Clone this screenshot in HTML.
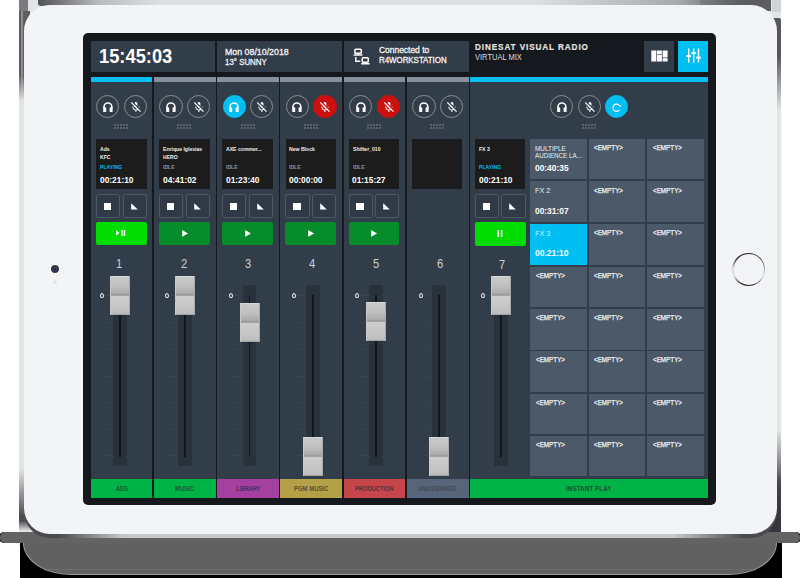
<!DOCTYPE html><html><head><meta charset="utf-8"><style>
*{margin:0;padding:0;box-sizing:border-box}
html,body{width:800px;height:578px;overflow:hidden;background:#fff}
body{position:relative;font-family:"Liberation Sans",sans-serif}
div,span,svg{position:absolute}
.t{white-space:nowrap;line-height:1}
</style></head><body>
<div style="left:19.50px;top:542.00px;width:762.00px;height:36.00px;background:#000"></div>
<div style="left:23.00px;top:536.00px;width:754.00px;height:39.00px;background:#9c9c9c;border-radius:0 0 48px 48px/0 0 32px 32px"></div>
<div style="left:24.20px;top:536.00px;width:751.60px;height:37.60px;background:linear-gradient(to bottom,#616161 0px,#616161 32.5px,#6a6a6a 33px,#6a6a6a 34px,#616161 34.5px);border-radius:0 0 47px 47px/0 0 31px 31px"></div>
<div style="left:0.00px;top:532.20px;width:800.00px;height:10.50px;background:#636363;border-radius:5px;box-shadow:-1px 0 0 #000,1px 0 0 #000"></div>
<div style="left:19.50px;top:532.20px;width:762.00px;height:10.50px;background:#636363"></div>
<div style="left:19.00px;top:0.00px;width:762.00px;height:532.20px;background:#e2e5e6"></div>
<div style="left:19.00px;top:0.00px;width:9.00px;height:12.00px;background:#7a7a80"></div>
<div style="left:19.00px;top:11.00px;width:11.00px;height:521.20px;background:linear-gradient(to bottom,#5c5d63 0px,#5c5d63 64px,#e2e5e6 90px,#e2e5e6 458px,#4c4d52 505px,#4c4d52 510px,#e2e5e6 520px)"></div>
<div style="left:21.20px;top:11.00px;width:1.80px;height:459.00px;background:linear-gradient(to bottom,rgba(255,255,255,0.3) 0px,rgba(255,255,255,0.3) 60px,rgba(255,255,255,0) 90px)"></div>
<div style="left:772.00px;top:0.00px;width:9.00px;height:12.00px;background:#d0d4d6"></div>
<div style="left:770.00px;top:18.00px;width:11.00px;height:514.20px;background:linear-gradient(to bottom,#55575c 0px,#55575c 38px,#e2e5e6 92px,#e2e5e6 412px,#4c4d52 467px,#4c4d52 514px);border-radius:2px 2px 0 0"></div>
<div style="left:745.00px;top:470.00px;width:36.00px;height:62.20px;background:linear-gradient(to bottom,rgba(54,54,60,0) 0px,#36363c 40px)"></div>
<div style="left:37.50px;top:0.00px;width:733.50px;height:6.00px;background:linear-gradient(to right,#505057 0px,#b8babc 60px,#dcdfdf 120px,#dcdfdf 500px,#a8aaac 640px,#5c5d63 700px,#5c5d63 734.5px);border-radius:0 0 3px 3px"></div>
<div style="left:700.00px;top:0.00px;width:71.00px;height:11.00px;background:linear-gradient(to right,#7c7d82 0px,#5c5d63 40px)"></div>
<div style="left:23.50px;top:8.50px;width:753.80px;height:529.30px;background:linear-gradient(to right,#4a4b50 0px,#4a4b50 35px,#c6c8ca 100px,#c6c8ca 650px,#4a4b50 720px);border-radius:26px"></div>
<div style="left:23.50px;top:4.50px;width:753.80px;height:529.20px;background:#f3f4f6;border-radius:26px"></div>
<div style="left:50.80px;top:265.30px;width:8.20px;height:8.20px;background:#3a3a3e;border-radius:50%;box-shadow:0 0 0 1px #fff"><div style="left:2.6px;top:2.6px;width:3px;height:3px;border-radius:50%;background:#1c3384"></div></div>
<div style="left:53.00px;top:280.10px;width:4.40px;height:4.40px;background:#e3e5e8;border-radius:50%"></div>
<div style="left:732.30px;top:252.80px;width:33.20px;height:33.20px;border-radius:50%;background:conic-gradient(#2c2d32 0deg,#3a3b40 50deg,#b8babd 95deg,#c8cacc 115deg,#2c2d32 160deg,#2c2d32 205deg,#d8dadc 245deg,#d8dadc 275deg,#3a3b40 315deg,#2c2d32 360deg)"><div style="left:1.4px;top:1.4px;right:1.4px;bottom:1.4px;border-radius:50%;background:#f3f4f6"></div></div>
<div style="left:83.00px;top:33.00px;width:632.50px;height:471.80px;background:#15191d;border-radius:5px"></div>
<div style="left:90.50px;top:41.00px;width:124.90px;height:31.00px;background:#323d4a"></div>
<div style="left:217.00px;top:41.00px;width:125.00px;height:31.00px;background:#323d4a"></div>
<div style="left:343.70px;top:41.00px;width:124.90px;height:31.00px;background:#323d4a"></div>
<div class="t" style="left:99.00px;top:45.95px;font-size:20.14px;font-weight:bold;color:#fff;transform:scaleX(0.910);transform-origin:0 0;">15:45:03</div>
<div class="t" style="left:225.20px;top:46.53px;font-size:9.42px;color:#f4f4f4;transform:scaleX(0.937);transform-origin:0 0;-webkit-text-stroke:0.3px #f4f4f4">Mon 08/10/2018</div>
<div class="t" style="left:225.20px;top:57.03px;font-size:9.42px;color:#f4f4f4;transform:scaleX(0.839);transform-origin:0 0;-webkit-text-stroke:0.3px #f4f4f4">13° SUNNY</div>
<div class="t" style="left:378.80px;top:46.39px;font-size:8.99px;color:#f4f4f4;transform:scaleX(0.939);transform-origin:0 0;-webkit-text-stroke:0.3px #f4f4f4">Connected to</div>
<div class="t" style="left:378.80px;top:56.14px;font-size:8.70px;color:#f4f4f4;transform:scaleX(0.908);transform-origin:0 0;-webkit-text-stroke:0.3px #f4f4f4">R4WORKSTATION</div>
<svg style="left:352px;top:47px" width="20" height="19" viewBox="0 0 20 19">
<rect x="2.9" y="2.32" width="6.4" height="3.9" rx="0.8" fill="none" stroke="#fff" stroke-width="1.5"/>
<rect x="1.6" y="7.3" width="8.9" height="1.5" rx="0.4" fill="#fff"/>
<path d="M3.8 10.0 V14.3 H8.2" fill="none" stroke="#fff" stroke-width="1.4"/>
<rect x="10.25" y="10.85" width="6" height="4.3" rx="0.8" fill="none" stroke="#fff" stroke-width="1.5"/>
<rect x="9.1" y="16.1" width="8.5" height="1.3" rx="0.4" fill="#fff"/>
</svg>
<div class="t" style="left:474.90px;top:42.97px;font-size:9.13px;font-weight:bold;color:#e2e2e2;transform:scaleX(0.895);transform-origin:0 0;-webkit-text-stroke:0.2px #e2e2e2;letter-spacing:1.0px">DINESAT VISUAL RADIO</div>
<div class="t" style="left:474.90px;top:53.29px;font-size:8.99px;color:#dcdcdc;transform:scaleX(0.838);transform-origin:0 0;">VIRTUAL MIX</div>
<div style="left:643.70px;top:41.40px;width:30.40px;height:30.40px;background:#323d4a"><svg style="left:7px;top:8.5px" width="17" height="12" viewBox="0 0 17 12">
<rect x="0.3" y="0.5" width="5" height="11" fill="#fff"/>
<rect x="5.9" y="0.5" width="5" height="3.5" fill="#fff"/>
<rect x="5.9" y="4.6" width="5" height="6.9" fill="#fff"/>
<rect x="11.6" y="0.5" width="5" height="7" fill="#fff"/>
<rect x="11.6" y="8.2" width="5" height="3.3" fill="#fff"/>
</svg></div>
<div style="left:677.80px;top:41.40px;width:30.40px;height:30.40px;background:#00bff2"><svg style="left:0;top:0" width="30.4" height="30.4" viewBox="0 0 30.4 30.4">
<g fill="#fff"><rect x="10.0" y="7.5" width="1.4" height="14"/><rect x="15.0" y="7.5" width="1.4" height="14"/><rect x="19.8" y="7.5" width="1.4" height="14"/>
<rect x="8.3" y="14.2" width="4.8" height="1.8"/><rect x="13.3" y="11.2" width="4.8" height="1.8"/><rect x="18.1" y="15.7" width="4.8" height="1.8"/></g>
</svg></div>
<div style="left:90.50px;top:76.50px;width:61.90px;height:5.50px;background:#00bff2"></div>
<div style="left:90.50px;top:82.00px;width:61.90px;height:396.80px;background:#323d4a"></div>
<div style="left:96.00px;top:95.10px;width:23.40px;height:23.40px;border-radius:50%;border:1.2px solid #8a8d90;background:transparent"></div><svg style="left:102.60px;top:101.90px" width="10" height="10" viewBox="0 0 10 10"><path d="M0.95 6.5 V4.9 A3.95 3.95 0 0 1 8.85 4.9 V6.5" fill="none" stroke="#fff" stroke-width="1.5"/><rect x="0.2" y="5.2" width="3" height="5" rx="0.8" fill="#fff"/><rect x="6.6" y="5.2" width="3" height="5" rx="0.8" fill="#fff"/></svg><div style="left:123.60px;top:95.10px;width:23.40px;height:23.40px;border-radius:50%;border:1.2px solid #8a8d90;background:transparent"></div><svg style="left:130.70px;top:102.30px" width="10" height="10" viewBox="0 0 10 10"><rect x="3.4" y="0" width="3" height="5.6" rx="1.5" fill="#fff"/><path d="M1.7 4.6 Q1.7 8.1 4.9 8.1 Q8.1 8.1 8.1 4.6" fill="none" stroke="#fff" stroke-width="1"/><rect x="4.4" y="8" width="1" height="2" fill="#fff"/><path d="M1.2 -0.3 L10.2 8.7" stroke="#323d4a" stroke-width="1.3"/><path d="M0.3 0.5 L9.5 9.7" stroke="#fff" stroke-width="1.1"/></svg><div style="left:114.00px;top:124.00px;width:2.00px;height:2.00px;background:#58626e"></div><div style="left:117.00px;top:124.00px;width:2.00px;height:2.00px;background:#58626e"></div><div style="left:120.00px;top:124.00px;width:2.00px;height:2.00px;background:#58626e"></div><div style="left:123.00px;top:124.00px;width:2.00px;height:2.00px;background:#58626e"></div><div style="left:126.00px;top:124.00px;width:2.00px;height:2.00px;background:#58626e"></div><div style="left:114.00px;top:127.00px;width:2.00px;height:2.00px;background:#58626e"></div><div style="left:117.00px;top:127.00px;width:2.00px;height:2.00px;background:#58626e"></div><div style="left:120.00px;top:127.00px;width:2.00px;height:2.00px;background:#58626e"></div><div style="left:123.00px;top:127.00px;width:2.00px;height:2.00px;background:#58626e"></div><div style="left:126.00px;top:127.00px;width:2.00px;height:2.00px;background:#58626e"></div>
<div style="left:96.10px;top:138.80px;width:50.50px;height:50.00px;background:#1c1c1c"></div><div class="t" style="left:99.90px;top:147.27px;font-size:5.94px;font-weight:bold;color:#efefef;transform:scaleX(0.860);transform-origin:0 0;">Ads</div><div class="t" style="left:99.90px;top:155.02px;font-size:5.65px;font-weight:bold;color:#efefef;transform:scaleX(0.904);transform-origin:0 0;">KFC</div><div class="t" style="left:99.90px;top:165.27px;font-size:5.94px;font-weight:bold;color:#00bff2;transform:scaleX(0.860);transform-origin:0 0;">PLAYING</div><div class="t" style="left:99.70px;top:174.98px;font-size:9.71px;font-weight:bold;color:#fff;transform:scaleX(0.862);transform-origin:0 0;">00:21:10</div>
<div style="left:96.00px;top:193.80px;width:24.20px;height:24.10px;border:1px solid #4d5866;border-radius:2px;background:#2f3a46"></div><div style="left:103.80px;top:202.90px;width:7.40px;height:7.20px;background:#fff"></div><div style="left:122.50px;top:193.80px;width:24.20px;height:24.10px;border:1px solid #4d5866;border-radius:2px;background:#2f3a46"></div><svg style="left:130.50px;top:202.80px" width="8" height="8" viewBox="0 0 8 8"><path d="M0.2 0.2 L0.2 6.6 L6.8 6.6 Z" fill="#fff"/></svg>
<div style="left:96.00px;top:221.50px;width:50.70px;height:23.80px;background:#00dc00;border-radius:2px"></div><svg style="left:116.35px;top:230.40px" width="10" height="6" viewBox="0 0 10 6"><path d="M0 0.2 L3.5 3 L0 5.8 Z" fill="#fff"/><rect x="5.2" y="0" width="1.5" height="6" fill="#fff"/><rect x="7.7" y="0" width="1.5" height="6" fill="#fff"/></svg>
<div class="t" style="left:116.35px;top:258.48px;font-size:12.43px;color:#ccd0d5;transform:scaleX(0.899);transform-origin:0 0;">1</div>
<div style="left:103.60px;top:294.50px;width:5.60px;height:1.00px;background:#3b4653"></div><div style="left:103.60px;top:321.50px;width:5.60px;height:1.00px;background:#3b4653"></div><div style="left:103.60px;top:348.50px;width:5.60px;height:1.00px;background:#3b4653"></div><div style="left:103.60px;top:375.50px;width:5.60px;height:1.00px;background:#3b4653"></div><div style="left:103.60px;top:402.00px;width:5.60px;height:1.00px;background:#3b4653"></div><div style="left:103.60px;top:428.90px;width:5.60px;height:1.00px;background:#3b4653"></div><div style="left:103.60px;top:455.30px;width:5.60px;height:1.00px;background:#3b4653"></div><div style="left:113.20px;top:285.20px;width:13.60px;height:181.20px;background:#29313b"></div><div style="left:119.20px;top:294.80px;width:1.60px;height:162.40px;background:#12161a"></div><div style="left:109.95px;top:276.00px;width:20.10px;height:39.00px;background:linear-gradient(to bottom,#cacaca 0%,#c0c0c0 25%,#acacac 44%,#9a9a9a 48%,#a4a4a4 50%,#cdcdcd 52.5%,#c4c4c4 85%,#b9b9b9 100%);box-shadow:inset 1px 0 0 #c9c9c9,inset -1px 0 0 #a9a9a9,inset 0 1px 0 #d6d6d6,inset 0 -1px 0 #a4a4a4"></div>
<svg style="left:99.60px;top:292.6px" width="4" height="5.4" viewBox="0 0 4 5.4"><ellipse cx="2" cy="2.7" rx="1.45" ry="2.15" fill="none" stroke="#e6e9ec" stroke-width="1.05"/></svg>
<div style="left:90.50px;top:478.80px;width:61.90px;height:18.90px;background:#00b346"></div><div class="t" style="left:115.60px;top:485.59px;font-size:7.10px;font-weight:bold;color:rgba(45,40,45,0.72);transform:scaleX(0.800);transform-origin:0 0;">ADS</div>
<div style="left:153.75px;top:76.50px;width:61.90px;height:5.50px;background:#87909e"></div>
<div style="left:153.75px;top:82.00px;width:61.90px;height:396.80px;background:#323d4a"></div>
<div style="left:159.25px;top:95.10px;width:23.40px;height:23.40px;border-radius:50%;border:1.2px solid #8a8d90;background:transparent"></div><svg style="left:165.85px;top:101.90px" width="10" height="10" viewBox="0 0 10 10"><path d="M0.95 6.5 V4.9 A3.95 3.95 0 0 1 8.85 4.9 V6.5" fill="none" stroke="#fff" stroke-width="1.5"/><rect x="0.2" y="5.2" width="3" height="5" rx="0.8" fill="#fff"/><rect x="6.6" y="5.2" width="3" height="5" rx="0.8" fill="#fff"/></svg><div style="left:186.85px;top:95.10px;width:23.40px;height:23.40px;border-radius:50%;border:1.2px solid #8a8d90;background:transparent"></div><svg style="left:193.95px;top:102.30px" width="10" height="10" viewBox="0 0 10 10"><rect x="3.4" y="0" width="3" height="5.6" rx="1.5" fill="#fff"/><path d="M1.7 4.6 Q1.7 8.1 4.9 8.1 Q8.1 8.1 8.1 4.6" fill="none" stroke="#fff" stroke-width="1"/><rect x="4.4" y="8" width="1" height="2" fill="#fff"/><path d="M1.2 -0.3 L10.2 8.7" stroke="#323d4a" stroke-width="1.3"/><path d="M0.3 0.5 L9.5 9.7" stroke="#fff" stroke-width="1.1"/></svg><div style="left:177.00px;top:124.00px;width:2.00px;height:2.00px;background:#58626e"></div><div style="left:180.00px;top:124.00px;width:2.00px;height:2.00px;background:#58626e"></div><div style="left:183.00px;top:124.00px;width:2.00px;height:2.00px;background:#58626e"></div><div style="left:186.00px;top:124.00px;width:2.00px;height:2.00px;background:#58626e"></div><div style="left:189.00px;top:124.00px;width:2.00px;height:2.00px;background:#58626e"></div><div style="left:177.00px;top:127.00px;width:2.00px;height:2.00px;background:#58626e"></div><div style="left:180.00px;top:127.00px;width:2.00px;height:2.00px;background:#58626e"></div><div style="left:183.00px;top:127.00px;width:2.00px;height:2.00px;background:#58626e"></div><div style="left:186.00px;top:127.00px;width:2.00px;height:2.00px;background:#58626e"></div><div style="left:189.00px;top:127.00px;width:2.00px;height:2.00px;background:#58626e"></div>
<div style="left:159.25px;top:138.80px;width:50.50px;height:50.00px;background:#1c1c1c"></div><div class="t" style="left:163.05px;top:147.27px;font-size:5.94px;font-weight:bold;color:#efefef;transform:scaleX(0.860);transform-origin:0 0;">Enrique Iglesias</div><div class="t" style="left:163.05px;top:155.02px;font-size:5.65px;font-weight:bold;color:#efefef;transform:scaleX(0.904);transform-origin:0 0;">HERO</div><div class="t" style="left:163.05px;top:165.27px;font-size:5.94px;font-weight:bold;color:#8a93a6;transform:scaleX(0.860);transform-origin:0 0;">IDLE</div><div class="t" style="left:162.85px;top:174.98px;font-size:9.71px;font-weight:bold;color:#fff;transform:scaleX(0.862);transform-origin:0 0;">04:41:02</div>
<div style="left:159.15px;top:193.80px;width:24.20px;height:24.10px;border:1px solid #4d5866;border-radius:2px;background:#2f3a46"></div><div style="left:166.95px;top:202.90px;width:7.40px;height:7.20px;background:#fff"></div><div style="left:185.65px;top:193.80px;width:24.20px;height:24.10px;border:1px solid #4d5866;border-radius:2px;background:#2f3a46"></div><svg style="left:193.65px;top:202.80px" width="8" height="8" viewBox="0 0 8 8"><path d="M0.2 0.2 L0.2 6.6 L6.8 6.6 Z" fill="#fff"/></svg>
<div style="left:159.15px;top:221.50px;width:50.70px;height:23.80px;background:#078c2c;border-radius:2px"></div><svg style="left:181.50px;top:229.90px" width="7" height="7" viewBox="0 0 7 7"><path d="M0.2 0 L6 3.4 L0.2 6.8 Z" fill="#fff"/></svg>
<div class="t" style="left:180.65px;top:258.48px;font-size:12.43px;color:#ccd0d5;transform:scaleX(0.899);transform-origin:0 0;">2</div>
<div style="left:168.80px;top:294.50px;width:5.60px;height:1.00px;background:#3b4653"></div><div style="left:168.80px;top:321.50px;width:5.60px;height:1.00px;background:#3b4653"></div><div style="left:168.80px;top:348.50px;width:5.60px;height:1.00px;background:#3b4653"></div><div style="left:168.80px;top:375.50px;width:5.60px;height:1.00px;background:#3b4653"></div><div style="left:168.80px;top:402.00px;width:5.60px;height:1.00px;background:#3b4653"></div><div style="left:168.80px;top:428.90px;width:5.60px;height:1.00px;background:#3b4653"></div><div style="left:168.80px;top:455.30px;width:5.60px;height:1.00px;background:#3b4653"></div><div style="left:178.40px;top:285.20px;width:13.60px;height:181.20px;background:#29313b"></div><div style="left:184.40px;top:294.80px;width:1.60px;height:162.40px;background:#12161a"></div><div style="left:175.15px;top:276.00px;width:20.10px;height:39.00px;background:linear-gradient(to bottom,#cacaca 0%,#c0c0c0 25%,#acacac 44%,#9a9a9a 48%,#a4a4a4 50%,#cdcdcd 52.5%,#c4c4c4 85%,#b9b9b9 100%);box-shadow:inset 1px 0 0 #c9c9c9,inset -1px 0 0 #a9a9a9,inset 0 1px 0 #d6d6d6,inset 0 -1px 0 #a4a4a4"></div>
<svg style="left:164.80px;top:292.6px" width="4" height="5.4" viewBox="0 0 4 5.4"><ellipse cx="2" cy="2.7" rx="1.45" ry="2.15" fill="none" stroke="#e6e9ec" stroke-width="1.05"/></svg>
<div style="left:153.75px;top:478.80px;width:61.90px;height:18.90px;background:#00b346"></div><div class="t" style="left:175.30px;top:485.59px;font-size:7.10px;font-weight:bold;color:rgba(45,40,45,0.72);transform:scaleX(0.826);transform-origin:0 0;">MUSIC</div>
<div style="left:217.00px;top:76.50px;width:61.90px;height:5.50px;background:#87909e"></div>
<div style="left:217.00px;top:82.00px;width:61.90px;height:396.80px;background:#323d4a"></div>
<div style="left:222.50px;top:95.10px;width:23.40px;height:23.40px;border-radius:50%;border:1.2px solid #00bff2;background:#00bff2"></div><svg style="left:229.10px;top:101.90px" width="10" height="10" viewBox="0 0 10 10"><path d="M0.95 6.5 V4.9 A3.95 3.95 0 0 1 8.85 4.9 V6.5" fill="none" stroke="#fff" stroke-width="1.5"/><rect x="0.2" y="5.2" width="3" height="5" rx="0.8" fill="#fff"/><rect x="6.6" y="5.2" width="3" height="5" rx="0.8" fill="#fff"/></svg><div style="left:250.10px;top:95.10px;width:23.40px;height:23.40px;border-radius:50%;border:1.2px solid #8a8d90;background:transparent"></div><svg style="left:257.20px;top:102.30px" width="10" height="10" viewBox="0 0 10 10"><rect x="3.4" y="0" width="3" height="5.6" rx="1.5" fill="#fff"/><path d="M1.7 4.6 Q1.7 8.1 4.9 8.1 Q8.1 8.1 8.1 4.6" fill="none" stroke="#fff" stroke-width="1"/><rect x="4.4" y="8" width="1" height="2" fill="#fff"/><path d="M1.2 -0.3 L10.2 8.7" stroke="#323d4a" stroke-width="1.3"/><path d="M0.3 0.5 L9.5 9.7" stroke="#fff" stroke-width="1.1"/></svg><div style="left:241.00px;top:124.00px;width:2.00px;height:2.00px;background:#58626e"></div><div style="left:244.00px;top:124.00px;width:2.00px;height:2.00px;background:#58626e"></div><div style="left:247.00px;top:124.00px;width:2.00px;height:2.00px;background:#58626e"></div><div style="left:250.00px;top:124.00px;width:2.00px;height:2.00px;background:#58626e"></div><div style="left:253.00px;top:124.00px;width:2.00px;height:2.00px;background:#58626e"></div><div style="left:241.00px;top:127.00px;width:2.00px;height:2.00px;background:#58626e"></div><div style="left:244.00px;top:127.00px;width:2.00px;height:2.00px;background:#58626e"></div><div style="left:247.00px;top:127.00px;width:2.00px;height:2.00px;background:#58626e"></div><div style="left:250.00px;top:127.00px;width:2.00px;height:2.00px;background:#58626e"></div><div style="left:253.00px;top:127.00px;width:2.00px;height:2.00px;background:#58626e"></div>
<div style="left:222.40px;top:138.80px;width:50.50px;height:50.00px;background:#1c1c1c"></div><div class="t" style="left:226.20px;top:147.27px;font-size:5.94px;font-weight:bold;color:#efefef;transform:scaleX(0.860);transform-origin:0 0;">AXE commer...</div><div class="t" style="left:226.20px;top:165.27px;font-size:5.94px;font-weight:bold;color:#8a93a6;transform:scaleX(0.860);transform-origin:0 0;">IDLE</div><div class="t" style="left:226.00px;top:174.98px;font-size:9.71px;font-weight:bold;color:#fff;transform:scaleX(0.862);transform-origin:0 0;">01:23:40</div>
<div style="left:222.30px;top:193.80px;width:24.20px;height:24.10px;border:1px solid #4d5866;border-radius:2px;background:#2f3a46"></div><div style="left:230.10px;top:202.90px;width:7.40px;height:7.20px;background:#fff"></div><div style="left:248.80px;top:193.80px;width:24.20px;height:24.10px;border:1px solid #4d5866;border-radius:2px;background:#2f3a46"></div><svg style="left:256.80px;top:202.80px" width="8" height="8" viewBox="0 0 8 8"><path d="M0.2 0.2 L0.2 6.6 L6.8 6.6 Z" fill="#fff"/></svg>
<div style="left:222.30px;top:221.50px;width:50.70px;height:23.80px;background:#078c2c;border-radius:2px"></div><svg style="left:244.65px;top:229.90px" width="7" height="7" viewBox="0 0 7 7"><path d="M0.2 0 L6 3.4 L0.2 6.8 Z" fill="#fff"/></svg>
<div class="t" style="left:245.00px;top:258.48px;font-size:12.43px;color:#ccd0d5;transform:scaleX(0.899);transform-origin:0 0;">3</div>
<div style="left:233.30px;top:294.50px;width:5.60px;height:1.00px;background:#3b4653"></div><div style="left:233.30px;top:321.50px;width:5.60px;height:1.00px;background:#3b4653"></div><div style="left:233.30px;top:348.50px;width:5.60px;height:1.00px;background:#3b4653"></div><div style="left:233.30px;top:375.50px;width:5.60px;height:1.00px;background:#3b4653"></div><div style="left:233.30px;top:402.00px;width:5.60px;height:1.00px;background:#3b4653"></div><div style="left:233.30px;top:428.90px;width:5.60px;height:1.00px;background:#3b4653"></div><div style="left:233.30px;top:455.30px;width:5.60px;height:1.00px;background:#3b4653"></div><div style="left:242.90px;top:285.20px;width:13.60px;height:181.20px;background:#29313b"></div><div style="left:248.90px;top:294.80px;width:1.60px;height:162.40px;background:#12161a"></div><div style="left:239.65px;top:302.80px;width:20.10px;height:39.00px;background:linear-gradient(to bottom,#cacaca 0%,#c0c0c0 25%,#acacac 44%,#9a9a9a 48%,#a4a4a4 50%,#cdcdcd 52.5%,#c4c4c4 85%,#b9b9b9 100%);box-shadow:inset 1px 0 0 #c9c9c9,inset -1px 0 0 #a9a9a9,inset 0 1px 0 #d6d6d6,inset 0 -1px 0 #a4a4a4"></div>
<svg style="left:229.30px;top:292.6px" width="4" height="5.4" viewBox="0 0 4 5.4"><ellipse cx="2" cy="2.7" rx="1.45" ry="2.15" fill="none" stroke="#e6e9ec" stroke-width="1.05"/></svg>
<div style="left:217.00px;top:478.80px;width:61.90px;height:18.90px;background:#a441a0"></div><div class="t" style="left:235.80px;top:485.59px;font-size:7.10px;font-weight:bold;color:rgba(45,40,45,0.72);transform:scaleX(0.780);transform-origin:0 0;">LIBRARY</div>
<div style="left:280.25px;top:76.50px;width:61.90px;height:5.50px;background:#87909e"></div>
<div style="left:280.25px;top:82.00px;width:61.90px;height:396.80px;background:#323d4a"></div>
<div style="left:285.75px;top:95.10px;width:23.40px;height:23.40px;border-radius:50%;border:1.2px solid #8a8d90;background:transparent"></div><svg style="left:292.35px;top:101.90px" width="10" height="10" viewBox="0 0 10 10"><path d="M0.95 6.5 V4.9 A3.95 3.95 0 0 1 8.85 4.9 V6.5" fill="none" stroke="#fff" stroke-width="1.5"/><rect x="0.2" y="5.2" width="3" height="5" rx="0.8" fill="#fff"/><rect x="6.6" y="5.2" width="3" height="5" rx="0.8" fill="#fff"/></svg><div style="left:313.35px;top:95.10px;width:23.40px;height:23.40px;border-radius:50%;border:1.2px solid #cc1010;background:#cc1010"></div><svg style="left:320.45px;top:102.30px" width="10" height="10" viewBox="0 0 10 10"><rect x="3.4" y="0" width="3" height="5.6" rx="1.5" fill="#fff"/><path d="M1.7 4.6 Q1.7 8.1 4.9 8.1 Q8.1 8.1 8.1 4.6" fill="none" stroke="#fff" stroke-width="1"/><rect x="4.4" y="8" width="1" height="2" fill="#fff"/><path d="M1.2 -0.3 L10.2 8.7" stroke="#cc1010" stroke-width="1.3"/><path d="M0.3 0.5 L9.5 9.7" stroke="#fff" stroke-width="1.1"/></svg><div style="left:304.00px;top:124.00px;width:2.00px;height:2.00px;background:#58626e"></div><div style="left:307.00px;top:124.00px;width:2.00px;height:2.00px;background:#58626e"></div><div style="left:310.00px;top:124.00px;width:2.00px;height:2.00px;background:#58626e"></div><div style="left:313.00px;top:124.00px;width:2.00px;height:2.00px;background:#58626e"></div><div style="left:316.00px;top:124.00px;width:2.00px;height:2.00px;background:#58626e"></div><div style="left:304.00px;top:127.00px;width:2.00px;height:2.00px;background:#58626e"></div><div style="left:307.00px;top:127.00px;width:2.00px;height:2.00px;background:#58626e"></div><div style="left:310.00px;top:127.00px;width:2.00px;height:2.00px;background:#58626e"></div><div style="left:313.00px;top:127.00px;width:2.00px;height:2.00px;background:#58626e"></div><div style="left:316.00px;top:127.00px;width:2.00px;height:2.00px;background:#58626e"></div>
<div style="left:285.55px;top:138.80px;width:50.50px;height:50.00px;background:#1c1c1c"></div><div class="t" style="left:289.35px;top:147.27px;font-size:5.94px;font-weight:bold;color:#efefef;transform:scaleX(0.860);transform-origin:0 0;">New Block</div><div class="t" style="left:289.35px;top:165.27px;font-size:5.94px;font-weight:bold;color:#8a93a6;transform:scaleX(0.860);transform-origin:0 0;">IDLE</div><div class="t" style="left:289.15px;top:174.98px;font-size:9.71px;font-weight:bold;color:#fff;transform:scaleX(0.862);transform-origin:0 0;">00:00:00</div>
<div style="left:285.45px;top:193.80px;width:24.20px;height:24.10px;border:1px solid #4d5866;border-radius:2px;background:#2f3a46"></div><div style="left:293.25px;top:202.90px;width:7.40px;height:7.20px;background:#fff"></div><div style="left:311.95px;top:193.80px;width:24.20px;height:24.10px;border:1px solid #4d5866;border-radius:2px;background:#2f3a46"></div><svg style="left:319.95px;top:202.80px" width="8" height="8" viewBox="0 0 8 8"><path d="M0.2 0.2 L0.2 6.6 L6.8 6.6 Z" fill="#fff"/></svg>
<div style="left:285.45px;top:221.50px;width:50.70px;height:23.80px;background:#078c2c;border-radius:2px"></div><svg style="left:307.80px;top:229.90px" width="7" height="7" viewBox="0 0 7 7"><path d="M0.2 0 L6 3.4 L0.2 6.8 Z" fill="#fff"/></svg>
<div class="t" style="left:308.60px;top:258.48px;font-size:12.43px;color:#ccd0d5;transform:scaleX(0.899);transform-origin:0 0;">4</div>
<div style="left:296.40px;top:294.50px;width:5.60px;height:1.00px;background:#3b4653"></div><div style="left:296.40px;top:321.50px;width:5.60px;height:1.00px;background:#3b4653"></div><div style="left:296.40px;top:348.50px;width:5.60px;height:1.00px;background:#3b4653"></div><div style="left:296.40px;top:375.50px;width:5.60px;height:1.00px;background:#3b4653"></div><div style="left:296.40px;top:402.00px;width:5.60px;height:1.00px;background:#3b4653"></div><div style="left:296.40px;top:428.90px;width:5.60px;height:1.00px;background:#3b4653"></div><div style="left:296.40px;top:455.30px;width:5.60px;height:1.00px;background:#3b4653"></div><div style="left:306.00px;top:285.20px;width:13.60px;height:181.20px;background:#29313b"></div><div style="left:312.00px;top:294.80px;width:1.60px;height:162.40px;background:#12161a"></div><div style="left:302.75px;top:436.80px;width:20.10px;height:39.00px;background:linear-gradient(to bottom,#cacaca 0%,#c0c0c0 25%,#acacac 44%,#9a9a9a 48%,#a4a4a4 50%,#cdcdcd 52.5%,#c4c4c4 85%,#b9b9b9 100%);box-shadow:inset 1px 0 0 #c9c9c9,inset -1px 0 0 #a9a9a9,inset 0 1px 0 #d6d6d6,inset 0 -1px 0 #a4a4a4"></div>
<svg style="left:292.40px;top:292.6px" width="4" height="5.4" viewBox="0 0 4 5.4"><ellipse cx="2" cy="2.7" rx="1.45" ry="2.15" fill="none" stroke="#e6e9ec" stroke-width="1.05"/></svg>
<div style="left:280.25px;top:478.80px;width:61.90px;height:18.90px;background:#b4a046"></div><div class="t" style="left:293.70px;top:485.59px;font-size:7.10px;font-weight:bold;color:rgba(45,40,45,0.72);transform:scaleX(0.838);transform-origin:0 0;">PGM MUSIC</div>
<div style="left:343.50px;top:76.50px;width:61.90px;height:5.50px;background:#87909e"></div>
<div style="left:343.50px;top:82.00px;width:61.90px;height:396.80px;background:#323d4a"></div>
<div style="left:349.00px;top:95.10px;width:23.40px;height:23.40px;border-radius:50%;border:1.2px solid #8a8d90;background:transparent"></div><svg style="left:355.60px;top:101.90px" width="10" height="10" viewBox="0 0 10 10"><path d="M0.95 6.5 V4.9 A3.95 3.95 0 0 1 8.85 4.9 V6.5" fill="none" stroke="#fff" stroke-width="1.5"/><rect x="0.2" y="5.2" width="3" height="5" rx="0.8" fill="#fff"/><rect x="6.6" y="5.2" width="3" height="5" rx="0.8" fill="#fff"/></svg><div style="left:376.60px;top:95.10px;width:23.40px;height:23.40px;border-radius:50%;border:1.2px solid #cc1010;background:#cc1010"></div><svg style="left:383.70px;top:102.30px" width="10" height="10" viewBox="0 0 10 10"><rect x="3.4" y="0" width="3" height="5.6" rx="1.5" fill="#fff"/><path d="M1.7 4.6 Q1.7 8.1 4.9 8.1 Q8.1 8.1 8.1 4.6" fill="none" stroke="#fff" stroke-width="1"/><rect x="4.4" y="8" width="1" height="2" fill="#fff"/><path d="M1.2 -0.3 L10.2 8.7" stroke="#cc1010" stroke-width="1.3"/><path d="M0.3 0.5 L9.5 9.7" stroke="#fff" stroke-width="1.1"/></svg><div style="left:367.00px;top:124.00px;width:2.00px;height:2.00px;background:#58626e"></div><div style="left:370.00px;top:124.00px;width:2.00px;height:2.00px;background:#58626e"></div><div style="left:373.00px;top:124.00px;width:2.00px;height:2.00px;background:#58626e"></div><div style="left:376.00px;top:124.00px;width:2.00px;height:2.00px;background:#58626e"></div><div style="left:379.00px;top:124.00px;width:2.00px;height:2.00px;background:#58626e"></div><div style="left:367.00px;top:127.00px;width:2.00px;height:2.00px;background:#58626e"></div><div style="left:370.00px;top:127.00px;width:2.00px;height:2.00px;background:#58626e"></div><div style="left:373.00px;top:127.00px;width:2.00px;height:2.00px;background:#58626e"></div><div style="left:376.00px;top:127.00px;width:2.00px;height:2.00px;background:#58626e"></div><div style="left:379.00px;top:127.00px;width:2.00px;height:2.00px;background:#58626e"></div>
<div style="left:348.70px;top:138.80px;width:50.50px;height:50.00px;background:#1c1c1c"></div><div class="t" style="left:352.50px;top:147.27px;font-size:5.94px;font-weight:bold;color:#efefef;transform:scaleX(0.860);transform-origin:0 0;">Shifter_010</div><div class="t" style="left:352.50px;top:165.27px;font-size:5.94px;font-weight:bold;color:#8a93a6;transform:scaleX(0.860);transform-origin:0 0;">IDLE</div><div class="t" style="left:352.30px;top:174.98px;font-size:9.71px;font-weight:bold;color:#fff;transform:scaleX(0.862);transform-origin:0 0;">01:15:27</div>
<div style="left:348.60px;top:193.80px;width:24.20px;height:24.10px;border:1px solid #4d5866;border-radius:2px;background:#2f3a46"></div><div style="left:356.40px;top:202.90px;width:7.40px;height:7.20px;background:#fff"></div><div style="left:375.10px;top:193.80px;width:24.20px;height:24.10px;border:1px solid #4d5866;border-radius:2px;background:#2f3a46"></div><svg style="left:383.10px;top:202.80px" width="8" height="8" viewBox="0 0 8 8"><path d="M0.2 0.2 L0.2 6.6 L6.8 6.6 Z" fill="#fff"/></svg>
<div style="left:348.60px;top:221.50px;width:50.70px;height:23.80px;background:#078c2c;border-radius:2px"></div><svg style="left:370.95px;top:229.90px" width="7" height="7" viewBox="0 0 7 7"><path d="M0.2 0 L6 3.4 L0.2 6.8 Z" fill="#fff"/></svg>
<div class="t" style="left:373.15px;top:258.48px;font-size:12.43px;color:#ccd0d5;transform:scaleX(0.899);transform-origin:0 0;">5</div>
<div style="left:359.35px;top:294.50px;width:5.60px;height:1.00px;background:#3b4653"></div><div style="left:359.35px;top:321.50px;width:5.60px;height:1.00px;background:#3b4653"></div><div style="left:359.35px;top:348.50px;width:5.60px;height:1.00px;background:#3b4653"></div><div style="left:359.35px;top:375.50px;width:5.60px;height:1.00px;background:#3b4653"></div><div style="left:359.35px;top:402.00px;width:5.60px;height:1.00px;background:#3b4653"></div><div style="left:359.35px;top:428.90px;width:5.60px;height:1.00px;background:#3b4653"></div><div style="left:359.35px;top:455.30px;width:5.60px;height:1.00px;background:#3b4653"></div><div style="left:368.95px;top:285.20px;width:13.60px;height:181.20px;background:#29313b"></div><div style="left:374.95px;top:294.80px;width:1.60px;height:162.40px;background:#12161a"></div><div style="left:365.70px;top:302.00px;width:20.10px;height:39.00px;background:linear-gradient(to bottom,#cacaca 0%,#c0c0c0 25%,#acacac 44%,#9a9a9a 48%,#a4a4a4 50%,#cdcdcd 52.5%,#c4c4c4 85%,#b9b9b9 100%);box-shadow:inset 1px 0 0 #c9c9c9,inset -1px 0 0 #a9a9a9,inset 0 1px 0 #d6d6d6,inset 0 -1px 0 #a4a4a4"></div>
<svg style="left:355.35px;top:292.6px" width="4" height="5.4" viewBox="0 0 4 5.4"><ellipse cx="2" cy="2.7" rx="1.45" ry="2.15" fill="none" stroke="#e6e9ec" stroke-width="1.05"/></svg>
<div style="left:343.50px;top:478.80px;width:61.90px;height:18.90px;background:#c6454a"></div><div class="t" style="left:354.80px;top:485.59px;font-size:7.10px;font-weight:bold;color:rgba(45,40,45,0.72);transform:scaleX(0.811);transform-origin:0 0;">PRODUCTION</div>
<div style="left:406.75px;top:76.50px;width:61.90px;height:5.50px;background:#87909e"></div>
<div style="left:406.75px;top:82.00px;width:61.90px;height:396.80px;background:#323d4a"></div>
<div style="left:412.25px;top:95.10px;width:23.40px;height:23.40px;border-radius:50%;border:1.2px solid #8a8d90;background:transparent"></div><svg style="left:418.85px;top:101.90px" width="10" height="10" viewBox="0 0 10 10"><path d="M0.95 6.5 V4.9 A3.95 3.95 0 0 1 8.85 4.9 V6.5" fill="none" stroke="#fff" stroke-width="1.5"/><rect x="0.2" y="5.2" width="3" height="5" rx="0.8" fill="#fff"/><rect x="6.6" y="5.2" width="3" height="5" rx="0.8" fill="#fff"/></svg><div style="left:439.85px;top:95.10px;width:23.40px;height:23.40px;border-radius:50%;border:1.2px solid #8a8d90;background:transparent"></div><svg style="left:446.95px;top:102.30px" width="10" height="10" viewBox="0 0 10 10"><rect x="3.4" y="0" width="3" height="5.6" rx="1.5" fill="#fff"/><path d="M1.7 4.6 Q1.7 8.1 4.9 8.1 Q8.1 8.1 8.1 4.6" fill="none" stroke="#fff" stroke-width="1"/><rect x="4.4" y="8" width="1" height="2" fill="#fff"/><path d="M1.2 -0.3 L10.2 8.7" stroke="#323d4a" stroke-width="1.3"/><path d="M0.3 0.5 L9.5 9.7" stroke="#fff" stroke-width="1.1"/></svg><div style="left:430.00px;top:124.00px;width:2.00px;height:2.00px;background:#58626e"></div><div style="left:433.00px;top:124.00px;width:2.00px;height:2.00px;background:#58626e"></div><div style="left:436.00px;top:124.00px;width:2.00px;height:2.00px;background:#58626e"></div><div style="left:439.00px;top:124.00px;width:2.00px;height:2.00px;background:#58626e"></div><div style="left:442.00px;top:124.00px;width:2.00px;height:2.00px;background:#58626e"></div><div style="left:430.00px;top:127.00px;width:2.00px;height:2.00px;background:#58626e"></div><div style="left:433.00px;top:127.00px;width:2.00px;height:2.00px;background:#58626e"></div><div style="left:436.00px;top:127.00px;width:2.00px;height:2.00px;background:#58626e"></div><div style="left:439.00px;top:127.00px;width:2.00px;height:2.00px;background:#58626e"></div><div style="left:442.00px;top:127.00px;width:2.00px;height:2.00px;background:#58626e"></div>
<div style="left:411.85px;top:138.80px;width:50.50px;height:50.00px;background:#1c1c1c"></div>
<div class="t" style="left:436.55px;top:258.48px;font-size:12.43px;color:#ccd0d5;transform:scaleX(0.899);transform-origin:0 0;">6</div>
<div style="left:422.60px;top:294.50px;width:5.60px;height:1.00px;background:#3b4653"></div><div style="left:422.60px;top:321.50px;width:5.60px;height:1.00px;background:#3b4653"></div><div style="left:422.60px;top:348.50px;width:5.60px;height:1.00px;background:#3b4653"></div><div style="left:422.60px;top:375.50px;width:5.60px;height:1.00px;background:#3b4653"></div><div style="left:422.60px;top:402.00px;width:5.60px;height:1.00px;background:#3b4653"></div><div style="left:422.60px;top:428.90px;width:5.60px;height:1.00px;background:#3b4653"></div><div style="left:422.60px;top:455.30px;width:5.60px;height:1.00px;background:#3b4653"></div><div style="left:432.20px;top:285.20px;width:13.60px;height:181.20px;background:#29313b"></div><div style="left:438.20px;top:294.80px;width:1.60px;height:162.40px;background:#12161a"></div><div style="left:428.95px;top:437.00px;width:20.10px;height:39.00px;background:linear-gradient(to bottom,#cacaca 0%,#c0c0c0 25%,#acacac 44%,#9a9a9a 48%,#a4a4a4 50%,#cdcdcd 52.5%,#c4c4c4 85%,#b9b9b9 100%);box-shadow:inset 1px 0 0 #c9c9c9,inset -1px 0 0 #a9a9a9,inset 0 1px 0 #d6d6d6,inset 0 -1px 0 #a4a4a4"></div>
<svg style="left:418.60px;top:292.6px" width="4" height="5.4" viewBox="0 0 4 5.4"><ellipse cx="2" cy="2.7" rx="1.45" ry="2.15" fill="none" stroke="#e6e9ec" stroke-width="1.05"/></svg>
<div style="left:406.75px;top:478.80px;width:61.90px;height:18.90px;background:#56657a"></div><div class="t" style="left:417.90px;top:485.59px;font-size:7.10px;font-weight:bold;color:rgba(45,50,58,0.55);transform:scaleX(0.807);transform-origin:0 0;">UNASSIGNED</div>
<div style="left:470.00px;top:76.50px;width:238.00px;height:5.50px;background:#00bff2"></div>
<div style="left:470.00px;top:82.00px;width:238.00px;height:396.80px;background:#323d4a"></div>
<div style="left:550.05px;top:95.10px;width:23.40px;height:23.40px;border-radius:50%;border:1.2px solid #8a8d90;background:transparent"></div><svg style="left:556.65px;top:101.90px" width="10" height="10" viewBox="0 0 10 10"><path d="M0.95 6.5 V4.9 A3.95 3.95 0 0 1 8.85 4.9 V6.5" fill="none" stroke="#fff" stroke-width="1.5"/><rect x="0.2" y="5.2" width="3" height="5" rx="0.8" fill="#fff"/><rect x="6.6" y="5.2" width="3" height="5" rx="0.8" fill="#fff"/></svg><div style="left:577.80px;top:95.10px;width:23.40px;height:23.40px;border-radius:50%;border:1.2px solid #8a8d90;background:transparent"></div><svg style="left:584.90px;top:102.30px" width="10" height="10" viewBox="0 0 10 10"><rect x="3.4" y="0" width="3" height="5.6" rx="1.5" fill="#fff"/><path d="M1.7 4.6 Q1.7 8.1 4.9 8.1 Q8.1 8.1 8.1 4.6" fill="none" stroke="#fff" stroke-width="1"/><rect x="4.4" y="8" width="1" height="2" fill="#fff"/><path d="M1.2 -0.3 L10.2 8.7" stroke="#323d4a" stroke-width="1.3"/><path d="M0.3 0.5 L9.5 9.7" stroke="#fff" stroke-width="1.1"/></svg><div style="left:604.80px;top:95.10px;width:23.40px;height:23.40px;border-radius:50%;border:1.2px solid #00bff2;background:#00bff2"></div><svg style="left:611.60px;top:103.20px" width="10" height="10" viewBox="0 0 10 10"><path d="M7.05 2.2 A3.6 3.6 0 1 0 7.45 6.81" fill="none" stroke="#fff" stroke-width="1.1"/><path d="M6.3 1.9 L8.9 1.9 L8.9 4.5 Z" fill="#fff"/></svg><div style="left:582.00px;top:124.00px;width:2.00px;height:2.00px;background:#58626e"></div><div style="left:585.00px;top:124.00px;width:2.00px;height:2.00px;background:#58626e"></div><div style="left:588.00px;top:124.00px;width:2.00px;height:2.00px;background:#58626e"></div><div style="left:591.00px;top:124.00px;width:2.00px;height:2.00px;background:#58626e"></div><div style="left:594.00px;top:124.00px;width:2.00px;height:2.00px;background:#58626e"></div><div style="left:582.00px;top:127.00px;width:2.00px;height:2.00px;background:#58626e"></div><div style="left:585.00px;top:127.00px;width:2.00px;height:2.00px;background:#58626e"></div><div style="left:588.00px;top:127.00px;width:2.00px;height:2.00px;background:#58626e"></div><div style="left:591.00px;top:127.00px;width:2.00px;height:2.00px;background:#58626e"></div><div style="left:594.00px;top:127.00px;width:2.00px;height:2.00px;background:#58626e"></div>
<div style="left:474.90px;top:139.00px;width:50.50px;height:50.00px;background:#1c1c1c"></div><div class="t" style="left:478.70px;top:147.47px;font-size:5.94px;font-weight:bold;color:#efefef;transform:scaleX(0.860);transform-origin:0 0;">FX 3</div><div class="t" style="left:478.70px;top:165.47px;font-size:5.94px;font-weight:bold;color:#00bff2;transform:scaleX(0.860);transform-origin:0 0;">PLAYING</div><div class="t" style="left:478.50px;top:175.18px;font-size:9.71px;font-weight:bold;color:#fff;transform:scaleX(0.862);transform-origin:0 0;">00:21:10</div>
<div style="left:475.20px;top:194.00px;width:24.20px;height:24.10px;border:1px solid #4d5866;border-radius:2px;background:#2f3a46"></div><div style="left:483.00px;top:203.10px;width:7.40px;height:7.20px;background:#fff"></div><div style="left:501.40px;top:194.00px;width:24.20px;height:24.10px;border:1px solid #4d5866;border-radius:2px;background:#2f3a46"></div><svg style="left:509.40px;top:203.00px" width="8" height="8" viewBox="0 0 8 8"><path d="M0.2 0.2 L0.2 6.6 L6.8 6.6 Z" fill="#fff"/></svg>
<div style="left:475.20px;top:221.50px;width:50.40px;height:24.00px;background:#00dc00;border-radius:2px"></div><svg style="left:497.40px;top:230.00px" width="6" height="7" viewBox="0 0 6 7"><rect x="0.5" y="0" width="1.6" height="7" fill="#fff"/><rect x="3.8" y="0" width="1.6" height="7" fill="#fff"/></svg>
<div class="t" style="left:498.90px;top:258.84px;font-size:12.00px;color:#ccd0d5;transform:scaleX(0.916);transform-origin:0 0;">7</div>
<div style="left:484.80px;top:294.50px;width:5.60px;height:1.00px;background:#3b4653"></div><div style="left:484.80px;top:321.50px;width:5.60px;height:1.00px;background:#3b4653"></div><div style="left:484.80px;top:348.50px;width:5.60px;height:1.00px;background:#3b4653"></div><div style="left:484.80px;top:375.50px;width:5.60px;height:1.00px;background:#3b4653"></div><div style="left:484.80px;top:402.00px;width:5.60px;height:1.00px;background:#3b4653"></div><div style="left:484.80px;top:428.90px;width:5.60px;height:1.00px;background:#3b4653"></div><div style="left:484.80px;top:455.30px;width:5.60px;height:1.00px;background:#3b4653"></div><div style="left:494.40px;top:285.20px;width:13.60px;height:181.20px;background:#29313b"></div><div style="left:500.40px;top:294.80px;width:1.60px;height:162.40px;background:#12161a"></div><div style="left:491.15px;top:276.00px;width:20.10px;height:39.00px;background:linear-gradient(to bottom,#cacaca 0%,#c0c0c0 25%,#acacac 44%,#9a9a9a 48%,#a4a4a4 50%,#cdcdcd 52.5%,#c4c4c4 85%,#b9b9b9 100%);box-shadow:inset 1px 0 0 #c9c9c9,inset -1px 0 0 #a9a9a9,inset 0 1px 0 #d6d6d6,inset 0 -1px 0 #a4a4a4"></div>
<svg style="left:480.8px;top:292.6px" width="4" height="5.4" viewBox="0 0 4 5.4"><ellipse cx="2" cy="2.7" rx="1.45" ry="2.15" fill="none" stroke="#e6e9ec" stroke-width="1.05"/></svg>
<div style="left:530.00px;top:138.80px;width:57.00px;height:40.60px;background:#4b5969"></div>
<div class="t" style="left:535.10px;top:144.77px;font-size:7.25px;color:#eef0f2;transform:scaleX(0.880);transform-origin:0 0;">MULTIPLE</div>
<div class="t" style="left:535.10px;top:152.42px;font-size:7.54px;color:#eef0f2;transform:scaleX(0.828);transform-origin:0 0;">AUDIENCE LA...</div>
<div class="t" style="left:535.10px;top:163.02px;font-size:9.43px;font-weight:bold;color:#fff;transform:scaleX(0.890);transform-origin:0 0;">00:40:35</div>
<div style="left:588.70px;top:138.80px;width:56.80px;height:40.60px;background:#4b5969"></div>
<div class="t" style="left:594.30px;top:144.17px;font-size:7.25px;color:#f2f4f6;transform:scaleX(0.868);transform-origin:0 0;-webkit-text-stroke:0.25px #f2f4f6">&lt;EMPTY&gt;</div>
<div style="left:647.30px;top:138.80px;width:56.80px;height:40.60px;background:#4b5969"></div>
<div class="t" style="left:652.90px;top:144.17px;font-size:7.25px;color:#f2f4f6;transform:scaleX(0.868);transform-origin:0 0;-webkit-text-stroke:0.25px #f2f4f6">&lt;EMPTY&gt;</div>
<div style="left:530.00px;top:181.40px;width:57.00px;height:40.60px;background:#4b5969"></div>
<div class="t" style="left:535.10px;top:187.37px;font-size:7.25px;color:#eef0f2;transform:scaleX(1.006);transform-origin:0 0;">FX 2</div>
<div class="t" style="left:535.10px;top:205.62px;font-size:9.43px;font-weight:bold;color:#fff;transform:scaleX(0.890);transform-origin:0 0;">00:31:07</div>
<div style="left:588.70px;top:181.40px;width:56.80px;height:40.60px;background:#4b5969"></div>
<div class="t" style="left:594.30px;top:186.77px;font-size:7.25px;color:#f2f4f6;transform:scaleX(0.868);transform-origin:0 0;-webkit-text-stroke:0.25px #f2f4f6">&lt;EMPTY&gt;</div>
<div style="left:647.30px;top:181.40px;width:56.80px;height:40.60px;background:#4b5969"></div>
<div class="t" style="left:652.90px;top:186.77px;font-size:7.25px;color:#f2f4f6;transform:scaleX(0.868);transform-origin:0 0;-webkit-text-stroke:0.25px #f2f4f6">&lt;EMPTY&gt;</div>
<div style="left:530.00px;top:224.00px;width:57.00px;height:40.60px;background:#00bff2"></div>
<div class="t" style="left:535.10px;top:229.97px;font-size:7.25px;color:#cdf2fd;transform:scaleX(1.006);transform-origin:0 0;">FX 3</div>
<div class="t" style="left:535.10px;top:248.22px;font-size:9.43px;font-weight:bold;color:#f4fbfe;transform:scaleX(0.903);transform-origin:0 0;">00.21:10</div>
<div style="left:588.70px;top:224.00px;width:56.80px;height:40.60px;background:#4b5969"></div>
<div class="t" style="left:594.30px;top:229.37px;font-size:7.25px;color:#f2f4f6;transform:scaleX(0.868);transform-origin:0 0;-webkit-text-stroke:0.25px #f2f4f6">&lt;EMPTY&gt;</div>
<div style="left:647.30px;top:224.00px;width:56.80px;height:40.60px;background:#4b5969"></div>
<div class="t" style="left:652.90px;top:229.37px;font-size:7.25px;color:#f2f4f6;transform:scaleX(0.868);transform-origin:0 0;-webkit-text-stroke:0.25px #f2f4f6">&lt;EMPTY&gt;</div>
<div style="left:530.00px;top:266.70px;width:57.00px;height:40.60px;background:#4b5969"></div>
<div class="t" style="left:535.60px;top:272.07px;font-size:7.25px;color:#f2f4f6;transform:scaleX(0.868);transform-origin:0 0;-webkit-text-stroke:0.25px #f2f4f6">&lt;EMPTY&gt;</div>
<div style="left:588.70px;top:266.70px;width:56.80px;height:40.60px;background:#4b5969"></div>
<div class="t" style="left:594.30px;top:272.07px;font-size:7.25px;color:#f2f4f6;transform:scaleX(0.868);transform-origin:0 0;-webkit-text-stroke:0.25px #f2f4f6">&lt;EMPTY&gt;</div>
<div style="left:647.30px;top:266.70px;width:56.80px;height:40.60px;background:#4b5969"></div>
<div class="t" style="left:652.90px;top:272.07px;font-size:7.25px;color:#f2f4f6;transform:scaleX(0.868);transform-origin:0 0;-webkit-text-stroke:0.25px #f2f4f6">&lt;EMPTY&gt;</div>
<div style="left:530.00px;top:309.00px;width:57.00px;height:40.60px;background:#4b5969"></div>
<div class="t" style="left:535.60px;top:314.37px;font-size:7.25px;color:#f2f4f6;transform:scaleX(0.868);transform-origin:0 0;-webkit-text-stroke:0.25px #f2f4f6">&lt;EMPTY&gt;</div>
<div style="left:588.70px;top:309.00px;width:56.80px;height:40.60px;background:#4b5969"></div>
<div class="t" style="left:594.30px;top:314.37px;font-size:7.25px;color:#f2f4f6;transform:scaleX(0.868);transform-origin:0 0;-webkit-text-stroke:0.25px #f2f4f6">&lt;EMPTY&gt;</div>
<div style="left:647.30px;top:309.00px;width:56.80px;height:40.60px;background:#4b5969"></div>
<div class="t" style="left:652.90px;top:314.37px;font-size:7.25px;color:#f2f4f6;transform:scaleX(0.868);transform-origin:0 0;-webkit-text-stroke:0.25px #f2f4f6">&lt;EMPTY&gt;</div>
<div style="left:530.00px;top:351.00px;width:57.00px;height:40.60px;background:#4b5969"></div>
<div class="t" style="left:535.60px;top:356.37px;font-size:7.25px;color:#f2f4f6;transform:scaleX(0.868);transform-origin:0 0;-webkit-text-stroke:0.25px #f2f4f6">&lt;EMPTY&gt;</div>
<div style="left:588.70px;top:351.00px;width:56.80px;height:40.60px;background:#4b5969"></div>
<div class="t" style="left:594.30px;top:356.37px;font-size:7.25px;color:#f2f4f6;transform:scaleX(0.868);transform-origin:0 0;-webkit-text-stroke:0.25px #f2f4f6">&lt;EMPTY&gt;</div>
<div style="left:647.30px;top:351.00px;width:56.80px;height:40.60px;background:#4b5969"></div>
<div class="t" style="left:652.90px;top:356.37px;font-size:7.25px;color:#f2f4f6;transform:scaleX(0.868);transform-origin:0 0;-webkit-text-stroke:0.25px #f2f4f6">&lt;EMPTY&gt;</div>
<div style="left:530.00px;top:393.50px;width:57.00px;height:40.60px;background:#4b5969"></div>
<div class="t" style="left:535.60px;top:398.87px;font-size:7.25px;color:#f2f4f6;transform:scaleX(0.868);transform-origin:0 0;-webkit-text-stroke:0.25px #f2f4f6">&lt;EMPTY&gt;</div>
<div style="left:588.70px;top:393.50px;width:56.80px;height:40.60px;background:#4b5969"></div>
<div class="t" style="left:594.30px;top:398.87px;font-size:7.25px;color:#f2f4f6;transform:scaleX(0.868);transform-origin:0 0;-webkit-text-stroke:0.25px #f2f4f6">&lt;EMPTY&gt;</div>
<div style="left:647.30px;top:393.50px;width:56.80px;height:40.60px;background:#4b5969"></div>
<div class="t" style="left:652.90px;top:398.87px;font-size:7.25px;color:#f2f4f6;transform:scaleX(0.868);transform-origin:0 0;-webkit-text-stroke:0.25px #f2f4f6">&lt;EMPTY&gt;</div>
<div style="left:530.00px;top:435.80px;width:57.00px;height:40.60px;background:#4b5969"></div>
<div class="t" style="left:535.60px;top:441.17px;font-size:7.25px;color:#f2f4f6;transform:scaleX(0.868);transform-origin:0 0;-webkit-text-stroke:0.25px #f2f4f6">&lt;EMPTY&gt;</div>
<div style="left:588.70px;top:435.80px;width:56.80px;height:40.60px;background:#4b5969"></div>
<div class="t" style="left:594.30px;top:441.17px;font-size:7.25px;color:#f2f4f6;transform:scaleX(0.868);transform-origin:0 0;-webkit-text-stroke:0.25px #f2f4f6">&lt;EMPTY&gt;</div>
<div style="left:647.30px;top:435.80px;width:56.80px;height:40.60px;background:#4b5969"></div>
<div class="t" style="left:652.90px;top:441.17px;font-size:7.25px;color:#f2f4f6;transform:scaleX(0.868);transform-origin:0 0;-webkit-text-stroke:0.25px #f2f4f6">&lt;EMPTY&gt;</div>
<div style="left:470.00px;top:478.80px;width:238.00px;height:18.90px;background:#00b346"></div><div class="t" style="left:566.30px;top:485.59px;font-size:7.10px;font-weight:bold;color:rgba(45,40,45,0.72);transform:scaleX(0.903);transform-origin:0 0;">INSTANT PLAY</div>
</body></html>
